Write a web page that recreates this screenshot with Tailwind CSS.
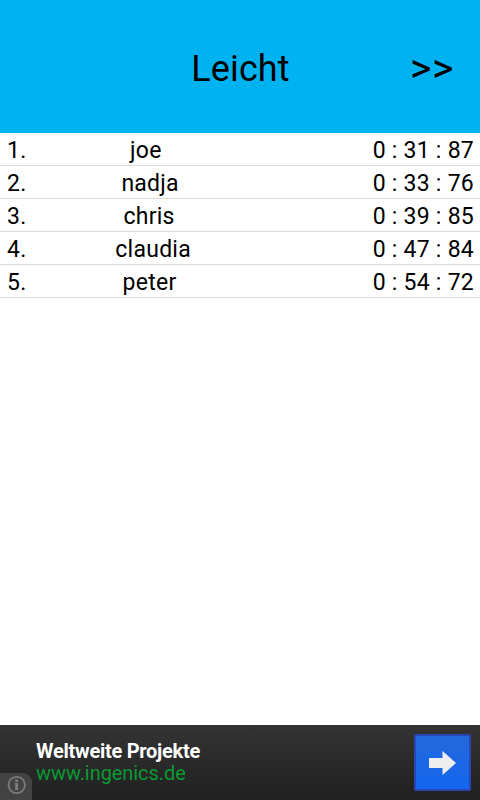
<!DOCTYPE html>
<html lang="de">
<head>
<meta charset="utf-8">
<title>Leicht</title>
<script src="https://cdn.jsdelivr.net/npm/@tailwindcss/browser@4"></script>
</head>
<body class="bg-white">
<div class="flex h-[800px] w-[480px] flex-col overflow-hidden bg-white font-[Roboto,sans-serif] text-black">
  <header class="grid h-[133px] shrink-0 grid-cols-[96px_1fr_96px] items-center bg-[#00b2f0]">
    <span></span>
    <h1 class="pt-[5px] pl-px text-center text-[36px] leading-[42px] tracking-[0.1px]">Leicht</h1>
    <button class="pt-[2px] text-center text-[41px] leading-[42px] tracking-[0.5px]">&gt;&gt;</button>
  </header>
  <ol class="flex-1 text-[23px] leading-[32px] tracking-[0.25px]">
    <li class="flex h-[33px] border-b border-[#dadada] pt-[2px] pr-[6px] pl-[7px]"><span class="w-[18px] shrink-0 tracking-[0.2px]">1.</span><span class="grow-2 text-center">joe</span><span class="grow pl-px text-right">0 : 31 : 87</span></li>
    <li class="flex h-[33px] border-b border-[#dadada] pt-[2px] pr-[6px] pl-[7px]"><span class="w-[18px] shrink-0 tracking-[0.2px]">2.</span><span class="grow-2 text-center">nadja</span><span class="grow pl-px text-right">0 : 33 : 76</span></li>
    <li class="flex h-[33px] border-b border-[#dadada] pt-[2px] pr-[6px] pl-[7px]"><span class="w-[18px] shrink-0 tracking-[0.2px]">3.</span><span class="grow-2 text-center">chris</span><span class="grow pl-px text-right">0 : 39 : 85</span></li>
    <li class="flex h-[33px] border-b border-[#dadada] pt-[2px] pr-[6px] pl-[7px]"><span class="w-[18px] shrink-0 tracking-[0.2px]">4.</span><span class="grow-2 text-center">claudia</span><span class="grow pl-px text-right">0 : 47 : 84</span></li>
    <li class="flex h-[33px] border-b border-[#dadada] pt-[2px] pr-[6px] pl-[7px]"><span class="w-[18px] shrink-0 tracking-[0.2px]">5.</span><span class="grow-2 text-center">peter</span><span class="grow pl-px text-right">0 : 54 : 72</span></li>
  </ol>
  <footer class="relative flex h-[75px] shrink-0 items-start justify-between bg-linear-to-b from-[#343434] to-[#202020] pt-[9px] pr-[9px] pl-[36px]">
    <div class="pt-[6px] text-[20px] leading-[22px]">
      <p class="font-bold tracking-[-0.27px] text-white">Weltweite Projekte</p>
      <p class="tracking-[-0.07px] text-[#0a9a33]">www.ingenics.de</p>
    </div>
    <div class="flex size-[57px] items-center justify-center rounded-[2px] border-2 border-[#2b45b4] bg-linear-to-b from-[#2468dc] to-[#1266ee]">
      <svg class="h-[24px] w-[27px]" viewBox="0 0 27 24"><path d="M0 7h13.5V0L27 12 13.5 24v-7H0z" fill="#eee"/></svg>
    </div>
    <div class="absolute bottom-0 left-0 h-[27px] w-[32px] rounded-tr-[9px] bg-[#434343]">
      <svg class="mt-[2px] ml-[7px] size-5" viewBox="0 0 20 20" fill="none" stroke="#7c7c7c"><circle cx="9.7" cy="10" r="8.2" stroke-width="1.8"/><path d="M9.6 4.5V7" stroke-width="2.8"/><path d="M9.6 8V15" stroke-width="2.8"/><path d="M7.8 8.6H10M7.8 14.5h4" stroke-width="1.1"/></svg>
    </div>
  </footer>
</div>
</body>
</html>
